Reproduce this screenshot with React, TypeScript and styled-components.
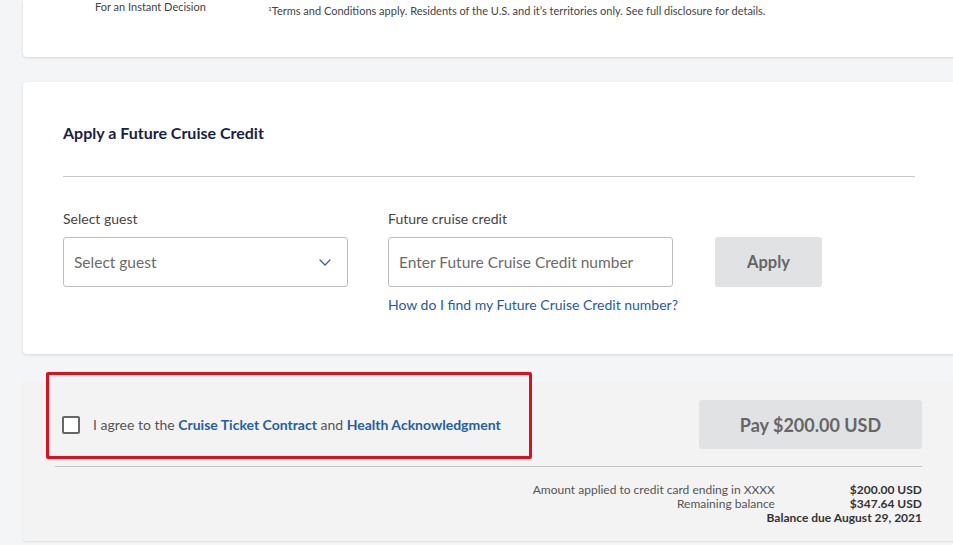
import React from "react";
import styled, { createGlobalStyle } from "styled-components";

const GlobalStyle = createGlobalStyle`
  html, body {
    margin: 0;
    padding: 0;
    background: #f4f5f7;
    overflow: hidden;
  }
  body {
    font-family: Lato, "Open Sans", Arial, sans-serif;
    color: #444;
  }
`;

const Page = styled.div`
  width: 953px;
  height: 545px;
  padding-left: 23px;
  box-sizing: border-box;
  display: flex;
  flex-direction: column;
  gap: 25px;
`;

const Card = styled.section`
  flex-shrink: 0;
  width: 940px;
  background: #fff;
  border-radius: 4px;
  box-shadow: 0 1px 3px rgba(0, 0, 0, 0.12);
  box-sizing: border-box;
`;

const DisclaimerCard = styled(Card)`
  height: 57px;
  border-top-left-radius: 0;
  border-top-right-radius: 0;
  display: grid;
  grid-template-columns: 173px auto;
  align-items: start;
  padding: 0 0 0 72px;
  line-height: 14px;
  color: #444;
`;

const Fine = styled.span<{ small?: boolean }>`
  font-size: 11px;
  margin-top: ${({ small }) => (small ? 2 : 0)}px;
  sup {
    font-size: 6.5px;
    vertical-align: 4px;
  }
`;

const CreditCard = styled(Card)`
  padding: 41px 48px 40px 40px;
`;

const Title = styled.h2`
  margin: 0;
  font-size: 16px;
  line-height: 20px;
  font-weight: 700;
  color: #1b2142;
`;

const Rule = styled.hr<{ tone?: string }>`
  border: 0;
  height: 1px;
  background: ${({ tone }) => tone || "#c9c9c9"};
  margin: 0;
`;

const TitleRule = styled(Rule)`
  margin: 33px 0 33px;
`;

const FieldGrid = styled.div`
  display: grid;
  grid-template-columns: 285px 285px 107px;
  column-gap: 40px;
  row-gap: 9px;
  align-items: center;
`;

const Label = styled.label`
  font-size: 14px;
  line-height: 18px;
  color: #444;
`;

const FieldBox = styled.div`
  height: 50px;
  border: 1px solid #bdbdbd;
  border-radius: 3px;
  box-sizing: border-box;
  display: flex;
  align-items: center;
  justify-content: space-between;
  padding: 0 16px 0 10px;
  background: #fff;
  font-size: 15.5px;
  color: #6b6b6b;
`;

const GreyButton = styled.button<{ wide?: boolean }>`
  height: ${({ wide }) => (wide ? 49 : 50)}px;
  width: ${({ wide }) => (wide ? 223 : 107)}px;
  border: 0;
  border-radius: 3px;
  background: #e1e2e4;
  color: #666;
  font-family: inherit;
  font-weight: 700;
  font-size: ${({ wide }) => (wide ? 18 : 16.5)}px;
  margin-left: ${({ wide }) => (wide ? 0 : 2)}px;
  cursor: default;
`;

const HelpLink = styled.a`
  grid-column: 2 / span 2;
  white-space: nowrap;
  font-size: 14px;
  line-height: 18px;
  color: #1f5c9e;
  text-decoration: none;
`;

const PaySection = styled.section`
  flex-shrink: 0;
  position: relative;
  width: 940px;
  margin-top: 3px;
  background: #f3f3f3;
  border-radius: 3px;
  box-shadow: 0 1px 2px rgba(0, 0, 0, 0.1);
  padding: 18px 41px 16px 32px;
  box-sizing: border-box;
`;

const ActionRow = styled.div`
  display: flex;
  align-items: center;
  justify-content: space-between;
  height: 49px;
`;

const Agree = styled.div`
  display: flex;
  align-items: center;
  gap: 13px;
  padding-left: 7px;
  font-size: 14px;
  color: #555;
`;

const Checkbox = styled.span`
  width: 18px;
  height: 18px;
  border: 2px solid #666;
  border-radius: 2px;
  box-sizing: border-box;
  background: #fff;
`;

const Strong = styled.a`
  color: #235fa6;
  font-weight: 700;
  text-decoration: none;
`;

const Highlight = styled.div`
  position: absolute;
  left: 23px;
  top: -10px;
  width: 486px;
  height: 87px;
  border: 3px solid #d8121e;
  border-radius: 2px;
  box-sizing: border-box;
  pointer-events: none;
`;

const PayRule = styled(Rule)`
  margin: 17px 0 16px;
  background: #c4c4c4;
`;

const Summary = styled.div`
  display: grid;
  grid-template-columns: auto auto;
  justify-content: end;
  column-gap: 75px;
  font-size: 12px;
  line-height: 14px;
  color: #444;
  text-align: right;
`;

const Amount = styled.span<{ bold?: boolean; span?: boolean }>`
  font-weight: ${({ bold }) => (bold ? 700 : 400)};
  color: ${({ bold }) => (bold ? "#333" : "#555")};
  grid-column: ${({ span }) => (span ? "1 / span 2" : "auto")};
`;

const Chevron = () => (
  <svg width="12" height="7" viewBox="0 0 12 7" fill="none">
    <polyline
      points="1,1 6,6 11,1"
      stroke="#3d5d8c"
      strokeWidth="1.3"
      strokeLinecap="round"
      strokeLinejoin="round"
    />
  </svg>
);

export default function App() {
  return (
    <>
      <GlobalStyle />
      <Page>
        <DisclaimerCard>
          <Fine>For an Instant Decision</Fine>
          <Fine small>
            <sup>1</sup>Terms and Conditions apply. Residents of the U.S. and
            it’s territories only. See full disclosure for details.
          </Fine>
        </DisclaimerCard>

        <CreditCard>
          <Title>Apply a Future Cruise Credit</Title>
          <TitleRule />
          <FieldGrid>
            <Label>Select guest</Label>
            <Label>Future cruise credit</Label>
            <span />
            <FieldBox>
              Select guest
              <Chevron />
            </FieldBox>
            <FieldBox>Enter Future Cruise Credit number</FieldBox>
            <GreyButton>Apply</GreyButton>
            <span />
            <HelpLink href="#">How do I find my Future Cruise Credit number?</HelpLink>
          </FieldGrid>
        </CreditCard>

        <PaySection>
          <Highlight />
          <ActionRow>
            <Agree>
              <Checkbox />
              <span>
                I agree to the <Strong href="#">Cruise Ticket Contract</Strong> and{" "}
                <Strong href="#">Health Acknowledgment</Strong>
              </span>
            </Agree>
            <GreyButton wide>Pay $200.00 USD</GreyButton>
          </ActionRow>
          <PayRule />
          <Summary>
            <Amount>Amount applied to credit card ending in XXXX</Amount>
            <Amount bold>$200.00 USD</Amount>
            <Amount>Remaining balance</Amount>
            <Amount bold>$347.64 USD</Amount>
            <Amount bold span>
              Balance due August 29, 2021
            </Amount>
          </Summary>
        </PaySection>
      </Page>
    </>
  );
}
